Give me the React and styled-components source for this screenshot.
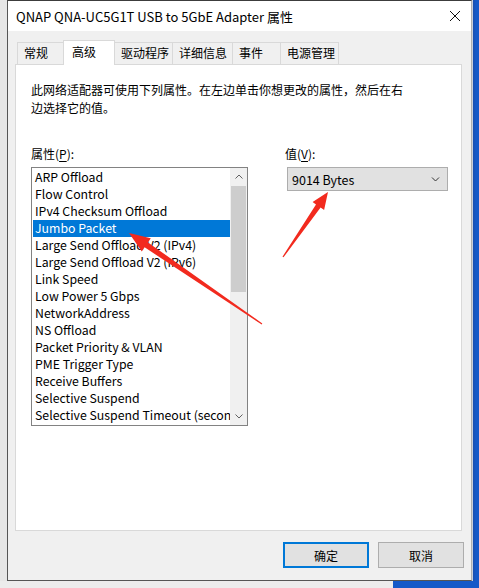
import React from 'react';
import styled, { createGlobalStyle } from 'styled-components';

const GlobalStyle = createGlobalStyle`
  html, body {
    margin: 0;
    padding: 0;
    background: #1559c8;
  }
  body {
    font-family: "Noto Sans CJK SC", "Noto Sans", sans-serif;
    font-size: 12px;
    color: #000;
  }
`;

const TABS = [
  { label: '常规', width: 47 },
  { label: '高级', width: 52, active: true },
  { label: '驱动程序', width: 59 },
  { label: '详细信息', width: 61 },
  { label: '事件', width: 49 },
  { label: '电源管理', width: 59 },
];

const PROPERTIES = [
  'ARP Offload',
  'Flow Control',
  'IPv4 Checksum Offload',
  'Jumbo Packet',
  'Large Send Offload V2 (IPv4)',
  'Large Send Offload V2 (IPv6)',
  'Link Speed',
  'Low Power 5 Gbps',
  'NetworkAddress',
  'NS Offload',
  'Packet Priority & VLAN',
  'PME Trigger Type',
  'Receive Buffers',
  'Selective Suspend',
  'Selective Suspend Timeout (seconds)',
];

const Desktop = styled.div`
  position: relative;
  width: 479px;
  height: 588px;
  overflow: hidden;
  background: #1559c8;
`;

const Screen = styled.div`
  display: flex;
  height: 581px;
`;

const LeftEdge = styled.div`
  width: 7px;
  background: #e6e6e6;
`;

const RightEdge = styled.div`
  flex: 1;
  border-left: 1px solid #c9cfdc;
  background: linear-gradient(90deg, #1b4fae 0, #1559c8 3px);
`;

const BottomStrip = styled.div`
  height: 7px;
  width: 393px;
  background: #ececec;
`;

const Window = styled.div`
  width: 465px;
  box-sizing: border-box;
  display: flex;
  flex-direction: column;
  border-top: 1px solid #3c3c3c;
  border-left: 1px solid #555;
  border-bottom: 1px solid #555;
  border-right: 1px solid #b0b0b0;
  background: #f0f0f0;
`;

const TitleBar = styled.div`
  height: 30px;
  flex-shrink: 0;
  display: flex;
  align-items: center;
  justify-content: space-between;
  padding: 0 10px 0 8px;
  background: #fff;
  font-size: 13px;
`;

const CloseIcon = () => (
  <svg width="12" height="12" viewBox="0 0 12 12">
    <path d="M1 1 L11 11 M11 1 L1 11" stroke="#111" strokeWidth="1" fill="none" />
  </svg>
);

const Body = styled.div`
  flex: 1;
  display: flex;
  flex-direction: column;
  padding: 9px 7px 0 7px;
`;

const TabRow = styled.div`
  display: flex;
  align-items: flex-end;
  height: 24px;
  padding-left: 2px;
`;

const Tab = styled.div`
  box-sizing: border-box;
  width: ${p => p.$width}px;
  height: ${p => (p.$active ? 25 : 22)}px;
  margin-left: -1px;
  margin-bottom: ${p => (p.$active ? -1 : 0)}px;
  padding-left: ${p => (p.$active ? 8 : 6)}px;
  padding-top: ${p => (p.$active ? 2 : 1)}px;
  line-height: 18px;
  border: 1px solid #d9d9d9;
  border-bottom: none;
  background: ${p => (p.$active ? '#fff' : '#f0f0f0')};
  z-index: ${p => (p.$active ? 1 : 0)};
  white-space: nowrap;

  &:first-child {
    margin-left: 0;
  }
`;

const Panel = styled.div`
  height: 467px;
  margin-right: 2px;
  box-sizing: border-box;
  border: 1px solid #d9d9d9;
  background: #fff;
  padding: 16px 15px 0 15px;
`;

const Description = styled.p`
  margin: 0;
  max-width: 380px;
  line-height: 18px;
`;

const Fields = styled.div`
  display: grid;
  grid-template-columns: 217px 165px;
  column-gap: 36px;
  margin-top: 28px;
`;

const Field = styled.div`
  display: flex;
  flex-direction: column;
  gap: 4px;
`;

const Label = styled.div`
  line-height: 18px;
  u {
    text-decoration-thickness: 1px;
    text-underline-offset: 2px;
  }
`;

const ListBox = styled.div`
  display: flex;
  width: 217px;
  height: 259px;
  box-sizing: border-box;
  border: 1px solid #828282;
  background: #fff;
`;

const Items = styled.ul`
  flex: 1;
  min-width: 0;
  list-style: none;
  margin: 0;
  padding: 1px 0 0 1px;
  font-size: 12.3px;
`;

const Item = styled.li`
  height: 17px;
  line-height: 17px;
  padding-left: 2px;
  white-space: nowrap;
  overflow: hidden;
  background: ${p => (p.$selected ? '#0078d7' : 'transparent')};
  color: ${p => (p.$selected ? '#fff' : '#000')};
`;

const ScrollBar = styled.div`
  width: 17px;
  display: flex;
  flex-direction: column;
  background: #f0f0f0;
`;

const ScrollArrow = styled.div`
  height: 17px;
  display: flex;
  align-items: center;
  justify-content: center;
`;

const ScrollTrack = styled.div`
  flex: 1;
  display: flex;
  flex-direction: column;
  padding: 1px 1px 0 1px;
`;

const Thumb = styled.div`
  height: 106px;
  background: #cdcdcd;
`;

const Chevron = ({ up, color = '#606060', w = 8 }) => (
  <svg width={w} height="5" viewBox="0 0 8 5">
    <path
      d={up ? 'M0.5 4.5 L4 1 L7.5 4.5' : 'M0.5 0.5 L4 4 L7.5 0.5'}
      stroke={color}
      strokeWidth="1"
      fill="none"
    />
  </svg>
);

const ValueField = styled(Field)`
  padding-left: 1px;
`;

const Select = styled.div`
  width: 161px;
  height: 24px;
  margin-left: 2px;
  box-sizing: border-box;
  display: flex;
  align-items: center;
  justify-content: space-between;
  padding: 0 7px 0 4px;
  border: 1px solid #adadad;
  background: #e1e1e1;
  font-size: 12.5px;
`;

const ButtonRow = styled.div`
  display: flex;
  justify-content: flex-end;
  gap: 9px;
  margin-top: 11px;
`;

const Button = styled.button`
  width: 86px;
  height: 26px;
  box-sizing: border-box;
  font: inherit;
  color: #000;
  background: #e1e1e1;
  border: ${p => (p.$primary ? '2px solid #0078d7' : '1px solid #adadad')};
  padding: 0;
`;

const Overlay = styled.svg`
  position: absolute;
  left: 0;
  top: 0;
  pointer-events: none;
`;

function arrowPoints(tx, ty, px, py, head, hw, sw, tw) {
  const dx = px - tx;
  const dy = py - ty;
  const len = Math.hypot(dx, dy);
  const ux = dx / len;
  const uy = dy / len;
  const nx = -uy;
  const ny = ux;
  const bx = px - ux * head;
  const by = py - uy * head;
  const pts = [
    [tx + nx * tw, ty + ny * tw],
    [bx + nx * sw, by + ny * sw],
    [bx + nx * hw, by + ny * hw],
    [px, py],
    [bx - nx * hw, by - ny * hw],
    [bx - nx * sw, by - ny * sw],
    [tx - nx * tw, ty - ny * tw],
  ];
  return pts.map(p => p.map(v => v.toFixed(1)).join(',')).join(' ');
}

export default function App() {
  return (
    <>
      <GlobalStyle />
      <Desktop>
        <Screen>
          <LeftEdge />
          <Window>
            <TitleBar>
              <span>QNAP QNA-UC5G1T USB to 5GbE Adapter 属性</span>
              <CloseIcon />
            </TitleBar>
            <Body>
              <TabRow>
                {TABS.map(t => (
                  <Tab key={t.label} $width={t.width} $active={t.active}>
                    {t.label}
                  </Tab>
                ))}
              </TabRow>
              <Panel>
                <Description>
                  此网络适配器可使用下列属性。在左边单击你想更改的属性，然后在右边选择它的值。
                </Description>
                <Fields>
                  <Field>
                    <Label>属性(<u>P</u>):</Label>
                    <ListBox>
                      <Items>
                        {PROPERTIES.map(p => (
                          <Item key={p} $selected={p === 'Jumbo Packet'}>{p}</Item>
                        ))}
                      </Items>
                      <ScrollBar>
                        <ScrollArrow><Chevron up /></ScrollArrow>
                        <ScrollTrack><Thumb /></ScrollTrack>
                        <ScrollArrow><Chevron /></ScrollArrow>
                      </ScrollBar>
                    </ListBox>
                  </Field>
                  <ValueField>
                    <Label>值(<u>V</u>):</Label>
                    <Select>
                      <span>9014 Bytes</span>
                      <Chevron color="#333" w={9} />
                    </Select>
                  </ValueField>
                </Fields>
              </Panel>
              <ButtonRow>
                <Button $primary>确定</Button>
                <Button>取消</Button>
              </ButtonRow>
            </Body>
          </Window>
          <RightEdge />
        </Screen>
        <BottomStrip />
        <Overlay width="479" height="588" viewBox="0 0 479 588">
          <polygon points={arrowPoints(262, 324, 129, 233, 21, 8, 3, 0.6)} fill="#f22a1e" />
          <polygon points={arrowPoints(283, 257, 328, 192, 17, 7, 2.8, 0.6)} fill="#f22a1e" />
        </Overlay>
      </Desktop>
    </>
  );
}
